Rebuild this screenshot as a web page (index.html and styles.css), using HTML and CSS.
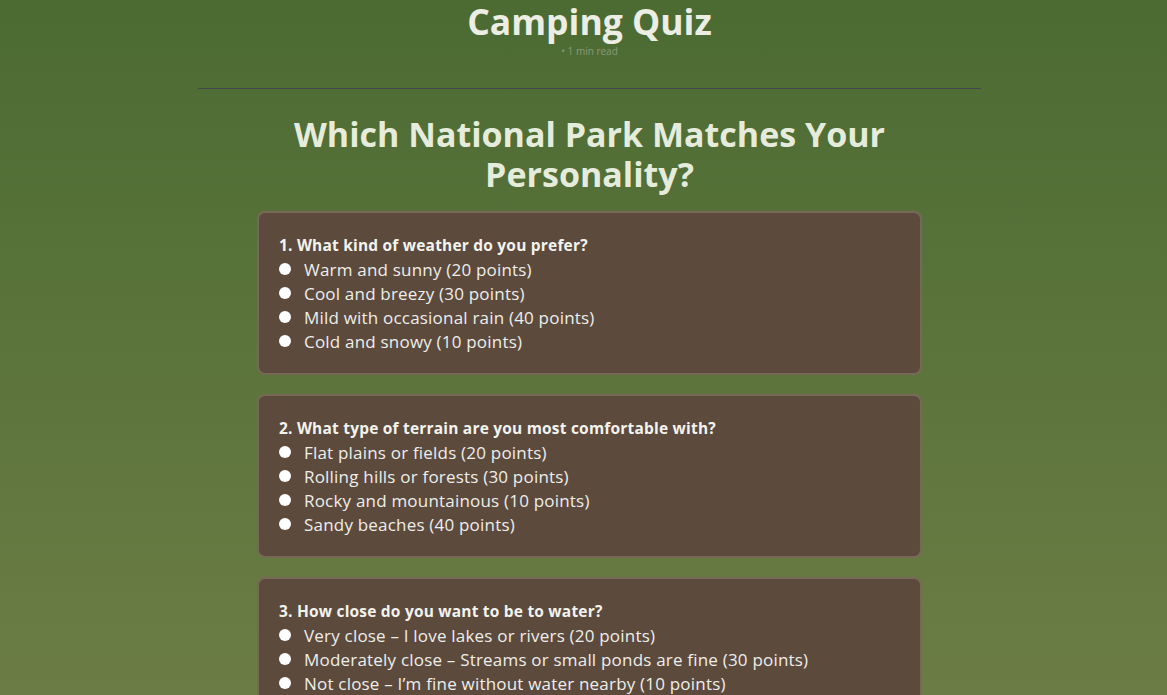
FILE: index.html
```html
<!DOCTYPE html>
<html lang="en">
<head>
<meta charset="utf-8">
<title>Camping Quiz</title>
<link rel="stylesheet" href="styles.css">
</head>
<body>
<main class="page">
  <header class="post-header">
    <h1 class="post-title">Camping Quiz</h1>
    <div class="post-meta">• 1 min read</div>
  </header>
  <hr class="divider">
  <h2 class="quiz-title">Which National Park Matches Your<br>Personality?</h2>

  <section class="card">
    <p class="question">1. What kind of weather do you prefer?</p>
    <label class="option"><input type="radio" name="q1"><span>Warm and sunny (20 points)</span></label>
    <label class="option"><input type="radio" name="q1"><span>Cool and breezy (30 points)</span></label>
    <label class="option"><input type="radio" name="q1"><span>Mild with occasional rain (40 points)</span></label>
    <label class="option"><input type="radio" name="q1"><span>Cold and snowy (10 points)</span></label>
  </section>

  <section class="card">
    <p class="question">2. What type of terrain are you most comfortable with?</p>
    <label class="option"><input type="radio" name="q2"><span>Flat plains or fields (20 points)</span></label>
    <label class="option"><input type="radio" name="q2"><span>Rolling hills or forests (30 points)</span></label>
    <label class="option"><input type="radio" name="q2"><span>Rocky and mountainous (10 points)</span></label>
    <label class="option"><input type="radio" name="q2"><span>Sandy beaches (40 points)</span></label>
  </section>

  <section class="card">
    <p class="question">3. How close do you want to be to water?</p>
    <label class="option"><input type="radio" name="q3"><span>Very close – I love lakes or rivers (20 points)</span></label>
    <label class="option"><input type="radio" name="q3"><span>Moderately close – Streams or small ponds are fine (30 points)</span></label>
    <label class="option"><input type="radio" name="q3"><span>Not close – I’m fine without water nearby (10 points)</span></label>
    <label class="option"><input type="radio" name="q3"><span>Somewhere in between (40 points)</span></label>
  </section>
</main>
</body>
</html>
```

FILE: styles.css
```css
html, body {
  margin: 0;
  padding: 0;
}
body {
  min-height: 100vh;
  background: linear-gradient(to bottom, #4b6b33 0px, #6b7d44 695px);
  background-color: #6b7d44;
  font-family: "Open Sans", "Liberation Sans", sans-serif;
  color: #e9ede0;
}
.page {
  display: flex;
  flex-direction: column;
  align-items: center;
  padding-left: 12px;
  padding-bottom: 40px;
}
.post-header {
  display: flex;
  flex-direction: column;
  align-items: center;
}
.post-title {
  margin: 0;
  font-size: 35.5px;
  line-height: 42px;
  font-weight: 700;
  color: #eceee4;
}
.post-meta {
  font-size: 10px;
  line-height: 14px;
  color: #8b9a78;
  margin-top: 2px;
}
.divider {
  width: 783px;
  border: 0;
  border-top: 1px solid #45474f;
  margin: 30px 0 0 0;
}
.quiz-title {
  margin: 25px 0 0 0;
  text-align: center;
  font-size: 34px;
  line-height: 40px;
  font-weight: 700;
  color: #e6ecdc;
}
.card {
  box-sizing: border-box;
  width: 665px;
  margin-top: 17px;
  padding: 20px 20px 20px 20px;
  background: #5c4a3d;
  border: 2px solid #786858;
  border-radius: 8px;
  display: flex;
  flex-direction: column;
}
.card + .card {
  margin-top: 19px;
}
.question {
  margin: 0;
  font-size: 15.5px;
  line-height: 24px;
  font-weight: 700;
  letter-spacing: 0.2px;
  color: #f3f3ee;
}
.option {
  display: flex;
  align-items: center;
  height: 24px;
  font-size: 17px;
  letter-spacing: 0.2px;
  color: #eeeeea;
}
.option input {
  appearance: none;
  -webkit-appearance: none;
  width: 12px;
  height: 12px;
  border-radius: 50%;
  background: #ffffff;
  margin: 0 13px 0 0;
  flex: none;
}
```
